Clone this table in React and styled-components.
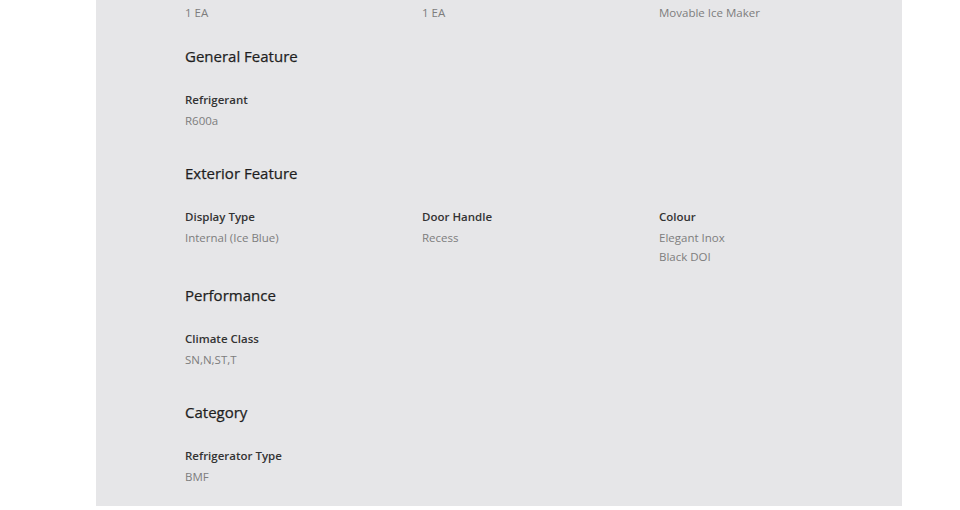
import styled, { createGlobalStyle } from "styled-components";

const GlobalStyle = createGlobalStyle`
    html, body {
        margin: 0;
        padding: 0;
        background: #fff;
    }
    body {
        font-family: "Open Sans", "Noto Sans", Arial, sans-serif;
    }
`;

const Page = styled.div`
    width: 960px;
    height: 510px;
    overflow: hidden;
    padding-left: 96px;
    box-sizing: border-box;
`;

const Panel = styled.div`
    width: 806px;
    height: 506px;
    background-color: #e6e6e8;
    padding: 3px 0 0 89px;
    box-sizing: border-box;
`;

const Section = styled.section`
    padding-bottom: 19px;

    &:first-child {
        padding-bottom: 24px;
    }
`;

const Heading = styled.h3`
    margin: 0 0 26px;
    font-size: 15px;
    line-height: 20px;
    font-weight: 500;
    color: #1f1f1f;
    -webkit-text-stroke: 0.25px #1f1f1f;
`;

const Row = styled.div`
    display: grid;
    grid-template-columns: 237px 237px 237px;
`;

const Label = styled.div`
    font-size: 11.5px;
    line-height: 16px;
    font-weight: 600;
    color: #333;
    margin-bottom: 3px;
`;

const Values = styled.div`
    min-height: ${(p) => (p.$last ? "0" : "33px")};
`;

const Value = styled.div`
    font-size: 11.5px;
    line-height: 19px;
    color: #7d7d7d;
`;

const sections = [
    {
        title: "General Feature",
        items: [{ label: "Refrigerant", values: ["R600a"] }],
    },
    {
        title: "Exterior Feature",
        items: [
            { label: "Display Type", values: ["Internal (Ice Blue)"] },
            { label: "Door Handle", values: ["Recess"] },
            { label: "Colour", values: ["Elegant Inox", "Black DOI"] },
        ],
    },
    {
        title: "Performance",
        items: [{ label: "Climate Class", values: ["SN,N,ST,T"] }],
    },
    {
        title: "Category",
        items: [{ label: "Refrigerator Type", values: ["BMF"] }],
    },
];

export default function App() {
    return (
        <Page>
            <GlobalStyle />
            <Panel>
                <Section>
                    <Row>
                        <Value>1 EA</Value>
                        <Value>1 EA</Value>
                        <Value>Movable Ice Maker</Value>
                    </Row>
                </Section>
                {sections.map((s, i) => (
                    <Section key={s.title}>
                        <Heading>{s.title}</Heading>
                        <Row>
                            {s.items.map((item) => (
                                <div key={item.label}>
                                    <Label>{item.label}</Label>
                                    <Values $last={i === sections.length - 1}>
                                        {item.values.map((v) => (
                                            <Value key={v}>{v}</Value>
                                        ))}
                                    </Values>
                                </div>
                            ))}
                        </Row>
                    </Section>
                ))}
            </Panel>
        </Page>
    );
}
